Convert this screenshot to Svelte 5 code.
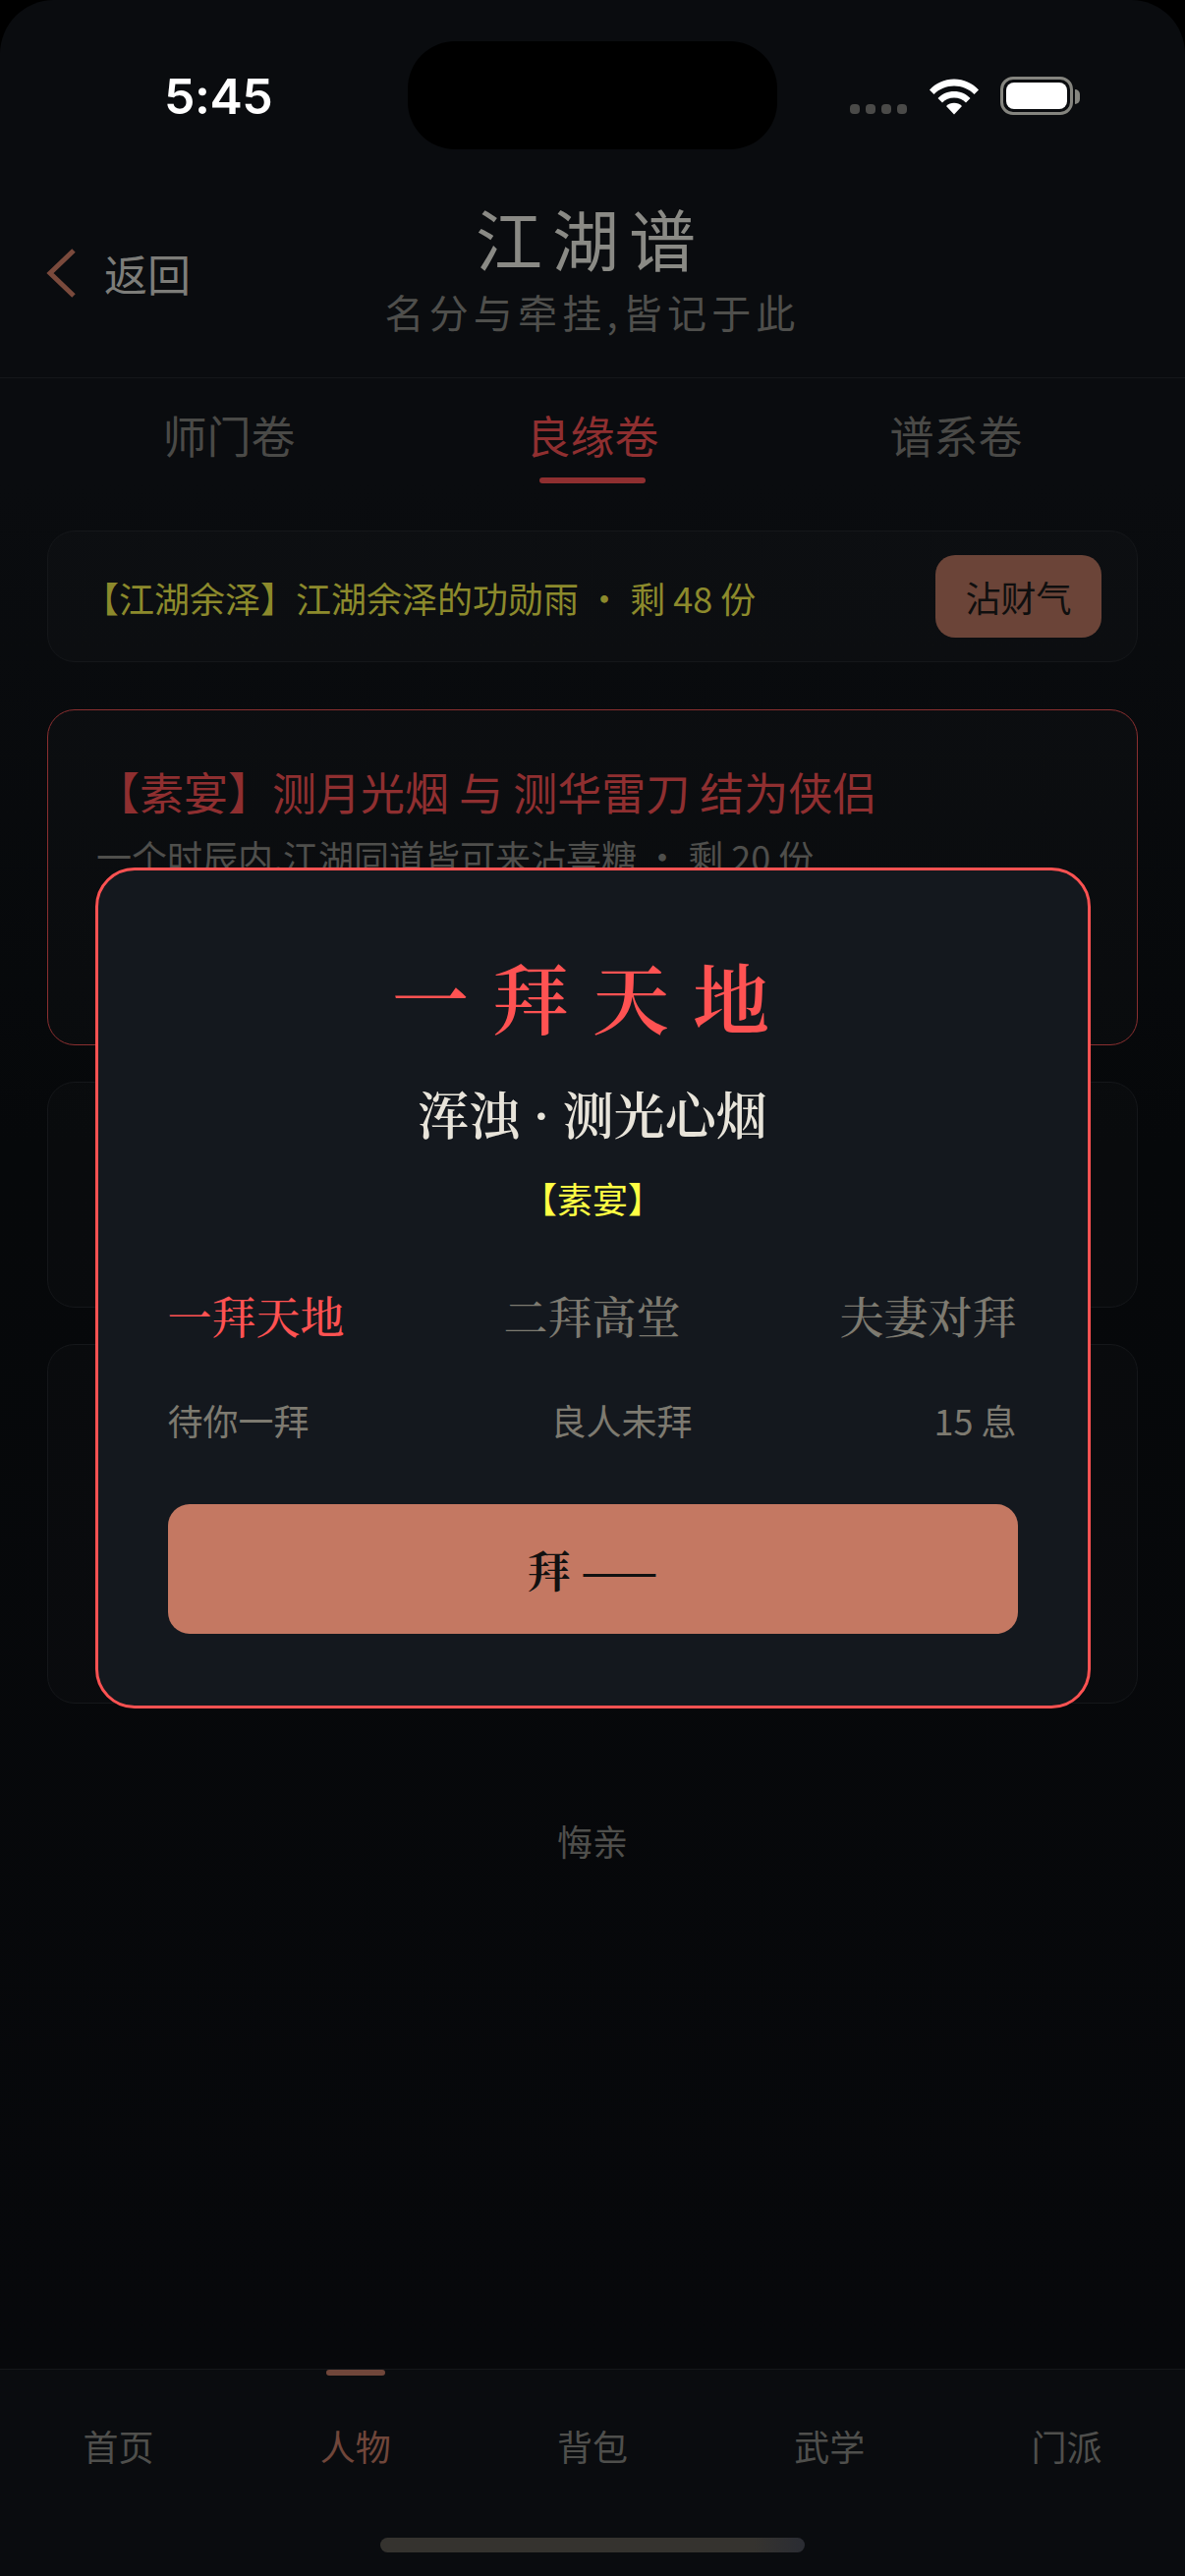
<script>
  const tabs = ['师门卷', '良缘卷', '谱系卷'];
  const navItems = ['首页', '人物', '背包', '武学', '门派'];
  const steps = ['一拜天地', '二拜高堂', '夫妻对拜'];
  const states = ['待你一拜', '良人未拜', '15 息'];
</script>

<div class="screen">
  <div class="status">
    <span class="time">5:45</span>
    <div class="island"></div>
    <div class="status-right">
      <div class="dots"><i></i><i></i><i></i><i></i></div>
      <svg class="wifi" width="52" height="38" viewBox="0 0 52 38">
        <path d="M1 12.5C7.5 5.5 16 1.5 26 1.5S44.500 5.500 51 12.500L46.500 17C41 11.500 34 8.500 26 8.500S11 11.500 5.500 17Z" fill="#fff" />
        <path d="M9.500 21C13.800 16.600 19.500 14 26 14S38.200 16.600 42.500 21L38 25.500C34.800 22.400 30.700 20.600 26 20.600S17.200 22.400 14 25.500Z" fill="#fff" />
        <path d="M18 29C20.200 26.900 22.900 25.800 26 25.800S31.800 26.900 34 29L26 37.500Z" fill="#fff" />
      </svg>
      <div class="battery"><div class="battery-fill"></div></div>
      <div class="battery-cap"></div>
    </div>
  </div>

  <header class="header">
    <button class="back">
      <svg width="32" height="52" viewBox="0 0 32 52">
        <path d="M29 3L5 26L29 49" fill="none" stroke="#7a4a3c" stroke-width="5" />
      </svg>
      <span>返回</span>
    </button>
    <h1>江湖谱</h1>
    <p>名分与牵挂,皆记于此</p>
  </header>

  <nav class="tabs">
    {#each tabs as tab, i}
      <div class="tab" class:active={i === 1}>{tab}</div>
    {/each}
  </nav>

  <main class="list">
    <div class="card rain">
      <span class="rain-text">【江湖余泽】江湖余泽的功勋雨 · 剩 48 份</span>
      <button class="rain-btn">沾财气</button>
    </div>
    <div class="card feast">
      <div class="feast-title">【素宴】测月光烟 与 测华雷刀 结为侠侣</div>
      <div class="feast-sub">一个时辰内,江湖同道皆可来沾喜糖 · 剩 20 份</div>
    </div>
    <div class="card plain-short"></div>
    <div class="card plain-tall"></div>
    <div class="regret">悔亲</div>
  </main>

  <footer class="bottom">
    <div class="nav">
      {#each navItems as item, i}
        <div class="nav-item" class:active={i === 1}>{item}</div>
      {/each}
    </div>
    <div class="home-bar"></div>
  </footer>

  <div class="overlay">
    <div class="modal">
      <div class="modal-title">一拜天地</div>
      <div class="modal-names">浑浊 · 测光心烟</div>
      <div class="modal-tag">【素宴】</div>
      <div class="row steps">
        {#each steps as step, i}
          <span class:current={i === 0}>{step}</span>
        {/each}
      </div>
      <div class="row states">
        {#each states as state}
          <span>{state}</span>
        {/each}
      </div>
      <button class="bow">拜 ——</button>
    </div>
  </div>
</div>

<style>
  :global(body) {
    margin: 0;
    background: #000;
  }

  .screen {
    position: relative;
    width: 1206px;
    height: 2622px;
    display: flex;
    flex-direction: column;
    overflow: hidden;
    background: #0a0c0f;
    border-radius: 55px 55px 0 0;
    font-family: "Noto Sans CJK SC", "Noto Sans", sans-serif;
    color: #7d7d79;
  }

  button {
    border: 0;
    padding: 0;
    background: none;
    font: inherit;
  }

  /* status bar */
  .status {
    position: relative;
    flex: none;
    height: 196px;
    box-sizing: border-box;
    padding-top: 70px;
  }

  .time {
    display: block;
    width: 109px;
    margin-left: 167px;
    font-family: Inter, "Liberation Sans", sans-serif;
    font-size: 50px;
    font-weight: 600;
    line-height: 56px;
    letter-spacing: -0.5px;
    color: #fff;
    white-space: nowrap;
  }

  .island {
    position: absolute;
    left: 415px;
    top: 42px;
    width: 376px;
    height: 110px;
    border-radius: 48px;
    background: #000;
  }

  .status-right {
    position: absolute;
    left: 865px;
    top: 78px;
    display: flex;
    align-items: flex-start;
  }

  .dots {
    display: flex;
    gap: 6px;
    margin-top: 28px;
  }

  .dots i {
    width: 10px;
    height: 10px;
    border-radius: 4px;
    background: #4a4a48;
  }

  .wifi {
    margin-left: 22px;
    margin-top: 1px;
  }

  .battery {
    box-sizing: border-box;
    width: 74px;
    height: 39px;
    margin-left: 21px;
    padding: 3px;
    border: 3px solid #85857f;
    border-radius: 13px;
  }

  .battery-fill {
    height: 100%;
    border-radius: 8px;
    background: #fff;
  }

  .battery-cap {
    width: 5px;
    height: 15px;
    margin: 13px 0 0 2px;
    border-radius: 0 5px 5px 0;
    background: #85857f;
  }

  /* header */
  .header {
    position: relative;
    flex: none;
    height: 189px;
    box-sizing: border-box;
    border-bottom: 1px solid #15171a;
    text-align: center;
  }

  .header h1 {
    margin: 0;
    padding-right: 4px;
    font-size: 68px;
    font-weight: 400;
    line-height: 92px;
    letter-spacing: 10px;
    color: #8a8a85;
  }

  .header p {
    margin: 4px 0 0;
    font-size: 40px;
    line-height: 50px;
    letter-spacing: 5.2px;
    color: #4f4f4c;
  }

  .back {
    position: absolute;
    left: 46px;
    top: 50px;
    display: flex;
    align-items: center;
    gap: 28px;
    font-size: 44px;
    color: #7d7d79;
  }

  /* tabs */
  .tabs {
    flex: none;
    display: flex;
    height: 108px;
    padding: 0 48px;
  }

  .tab {
    position: relative;
    width: 370px;
    box-sizing: border-box;
    padding-top: 26px;
    text-align: center;
    font-size: 45px;
    line-height: 64px;
    color: #4a4a47;
  }

  .tab.active {
    color: #8f2f30;
  }

  .tab.active::after {
    content: '';
    position: absolute;
    left: 131px;
    top: 101px;
    width: 108px;
    height: 6px;
    border-radius: 3px;
    background: #8f2f30;
  }

  /* cards */
  .list {
    flex: 1;
    display: flex;
    flex-direction: column;
    gap: 37px;
    padding: 47px 48px 0;
    background: linear-gradient(#0a0c0f, #06080a 35%, #07080b);
  }

  .card {
    flex: none;
    box-sizing: border-box;
    border: 1px solid #15171a;
    border-radius: 28px;
    background: rgba(255, 255, 255, 0.015);
  }

  .rain {
    display: flex;
    align-items: center;
    justify-content: space-between;
    height: 134px;
    padding: 0 36px 0 36px;
    margin-bottom: 11px;
  }

  .rain-text {
    padding-top: 2px;
    font-size: 36px;
    color: #8c8a2c;
  }

  .rain-btn {
    width: 169px;
    height: 84px;
    border-radius: 20px;
    background: #6b4438;
    font-size: 36px;
    color: #0f0f0f;
  }

  .feast {
    height: 342px;
    padding: 48px 0 0 49px;
    border-color: #8a2f30;
  }

  .feast-title {
    font-size: 45px;
    line-height: 70px;
    color: #8f2f30;
    margin-left: -1px;
  }

  .feast-sub {
    margin-top: 3px;
    font-size: 36px;
    line-height: 54px;
    color: #4f4f4c;
  }

  .plain-short {
    height: 230px;
  }

  .plain-tall {
    height: 366px;
  }

  .regret {
    margin-top: 76px;
    text-align: center;
    font-size: 36px;
    line-height: 52px;
    color: #4f4f4c;
  }

  /* bottom nav */
  .bottom {
    flex: none;
    height: 211px;
    box-sizing: border-box;
    border-top: 1px solid #15171a;
  }

  .nav {
    display: grid;
    grid-template-columns: repeat(5, 1fr);
  }

  .nav-item {
    position: relative;
    padding-top: 51px;
    text-align: center;
    font-size: 36px;
    line-height: 52px;
    color: #4f4f4c;
  }

  .nav-item.active {
    color: #70463a;
  }

  .nav-item.active::before {
    content: '';
    position: absolute;
    left: 91px;
    top: 0;
    width: 60px;
    height: 6px;
    border-radius: 3px;
    background: #70463a;
  }

  .home-bar {
    width: 432px;
    height: 15px;
    margin: 68px auto 0;
    border-radius: 8px;
    background: linear-gradient(90deg, #35332f 88%, #2a2c33);
  }

  /* modal */
  .overlay {
    position: absolute;
    inset: 0;
    display: flex;
    align-items: center;
    justify-content: center;
  }

  .modal {
    box-sizing: border-box;
    width: 1013px;
    height: 856px;
    padding: 72px 71px 0;
    border: 3px solid #ff5252;
    border-radius: 40px;
    background: #14181e;
    text-align: center;
  }

  .modal-title {
    font-family: "Noto Serif CJK SC", serif;
    font-size: 78px;
    font-weight: 600;
    line-height: 110px;
    letter-spacing: 24px;
    color: #ff5252;
  }

  .modal-names {
    margin-top: 27px;
    font-family: "Noto Serif CJK SC", serif;
    font-size: 52px;
    font-weight: 600;
    line-height: 76px;
    color: #e8e4da;
  }

  .modal-tag {
    margin-top: 22px;
    font-size: 36px;
    line-height: 52px;
    color: #ffff44;
  }

  .row {
    display: flex;
    justify-content: space-between;
    padding-right: 1px;
  }

  .steps {
    margin-top: 62px;
    font-family: "Noto Serif CJK SC", serif;
    font-size: 45px;
    font-weight: 500;
    line-height: 64px;
    color: #7d7a70;
  }

  .steps .current {
    color: #ff5252;
  }

  .states {
    margin-top: 48px;
    font-size: 36px;
    line-height: 52px;
    color: #7d7a70;
  }

  .bow {
    display: block;
    width: 100%;
    height: 132px;
    margin-top: 60px;
    border-radius: 22px;
    background: #c47862;
    font-family: "Noto Serif CJK SC", serif;
    font-size: 44px;
    font-weight: 700;
    color: #111;
  }
</style>
